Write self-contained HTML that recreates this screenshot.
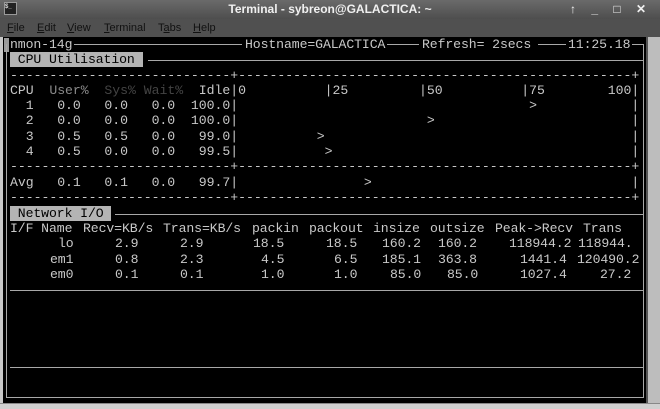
<!DOCTYPE html>
<html><head><meta charset="utf-8"><style>
*{margin:0;padding:0;box-sizing:border-box}
body{width:660px;height:409px;overflow:hidden;background:#c8c8c8;position:relative;font-family:"Liberation Mono",monospace}
#title{position:absolute;left:0;top:0;width:660px;height:19px;background:linear-gradient(#6a6a6a,#4e4e4e);color:#f0f0f0;font:bold 12px "Liberation Sans",sans-serif;text-align:center;line-height:19px}
#menu{position:absolute;left:0;top:19px;width:660px;height:18px;background:#505050;font:11px "Liberation Sans",sans-serif;color:#111;line-height:18px}
#menu span{position:absolute;top:0}
#term{position:absolute;left:3px;top:37px;width:643px;height:366px;background:#000}
#sb{position:absolute;left:646px;top:37px;width:14px;height:366px;background:#bdbdbd;border-left:2px solid #555}
#bot{position:absolute;left:0;top:403px;width:660px;height:6px;background:#d0d0d0;border-top:1px solid #888}
.t{position:absolute;white-space:pre;font-size:13.16px;line-height:15.3px;color:#c8c8c8;letter-spacing:-0.1px}
.h{position:absolute;height:1px;background:#a8a8a8}
.v{position:absolute;width:1px;background:#a8a8a8}
.hl{background:#b4b4b4;color:#000}
.d1{color:#8a8a8a}.d2{color:#444}
</style></head><body>
<div id="title"><span style="position:absolute;left:4px;top:2px;width:13px;height:13px;background:#222;border:1px solid #999;font-size:6px;line-height:8px;color:#ddd;text-align:left">$_</span>Terminal - sybreon@GALACTICA: ~<span style="position:absolute;right:8px;top:0;font-size:12px;letter-spacing:6px">↑ _ □ ✕</span></div>
<div id="menu"><span style="left:7px"><u>F</u>ile</span><span style="left:37px"><u>E</u>dit</span><span style="left:67px"><u>V</u>iew</span><span style="left:104px"><u>T</u>erminal</span><span style="left:158px">T<u>a</u>bs</span><span style="left:193px"><u>H</u>elp</span></div>
<div id="term"></div>
<div id="sb"></div>
<div id="bot"></div>
<div style="position:absolute;left:4px;top:38px;width:5px;height:14px;background:#9a9a9a"></div>
<div class="v" style="left:6px;top:44px;height:353px"></div>
<div class="v" style="left:643px;top:44px;height:353px"></div>
<div class="h" style="left:6px;top:397px;width:638px"></div>
<div class="h" style="left:74px;top:44px;width:168px"></div>
<div class="h" style="left:387px;top:44px;width:32px"></div>
<div class="h" style="left:538px;top:44px;width:28px"></div>
<div class="h" style="left:632px;top:44px;width:12px"></div>
<div class="h" style="left:148px;top:60px;width:495px"></div>
<div class="h" style="left:115px;top:214px;width:528px"></div>
<div class="h" style="left:10px;top:290px;width:633px"></div>
<div class="h" style="left:10px;top:367px;width:633px"></div>
<div class="t" style="left:10px;top:37px">nmon-14g</div>
<div class="t" style="left:245px;top:37px">Hostname=GALACTICA</div>
<div class="t" style="left:422px;top:37px">Refresh= 2secs</div>
<div class="t" style="left:568px;top:37px">11:25.18</div>
<div class="t" style="left:10px;top:52.3px"><span class="hl"> CPU Utilisation </span></div>
<div class="t" style="left:10px;top:67.6px;letter-spacing:-0.03px">----------------------------+--------------------------------------------------+
CPU  <span class="d1">User%</span>  <span class="d2">Sys%</span> <span class="d2">Wait%</span>  Idle|0          |25         |50          |75        100|
  1   0.0   0.0   0.0  100.0|                                     &gt;            |
  2   0.0   0.0   0.0  100.0|                        &gt;                         |
  3   0.5   0.5   0.0   99.0|          &gt;                                       |
  4   0.5   0.0   0.0   99.5|           &gt;                                      |
----------------------------+--------------------------------------------------+
Avg   0.1   0.1   0.0   99.7|                &gt;                                 |
----------------------------+--------------------------------------------------+</div>
<div class="t" style="left:10px;top:205.7px"><span class="hl"> Network I/O </span></div>
<div class="t" style="left:10px;top:221px">I/F Name</div>
<div class="t" style="left:83px;top:221px">Recv=KB/s</div>
<div class="t" style="left:163px;top:221px">Trans=KB/s</div>
<div class="t" style="left:252px;top:221px">packin</div>
<div class="t" style="left:309px;top:221px">packout</div>
<div class="t" style="left:373px;top:221px">insize</div>
<div class="t" style="left:430px;top:221px">outsize</div>
<div class="t" style="left:495px;top:221px">Peak-&gt;Recv</div>
<div class="t" style="left:583px;top:221px">Trans</div>

<div class="t" style="left:58px;top:236.3px">lo</div>
<div class="t" style="left:115px;top:236.3px">2.9</div>
<div class="t" style="left:180px;top:236.3px">2.9</div>
<div class="t" style="left:253px;top:236.3px">18.5</div>
<div class="t" style="left:326px;top:236.3px">18.5</div>
<div class="t" style="left:382px;top:236.3px">160.2</div>
<div class="t" style="left:438px;top:236.3px">160.2</div>
<div class="t" style="left:509px;top:236.3px">118944.2</div>
<div class="t" style="left:578px;top:236.3px">118944.</div>

<div class="t" style="left:50px;top:251.6px">em1</div>
<div class="t" style="left:115px;top:251.6px">0.8</div>
<div class="t" style="left:180px;top:251.6px">2.3</div>
<div class="t" style="left:261px;top:251.6px">4.5</div>
<div class="t" style="left:334px;top:251.6px">6.5</div>
<div class="t" style="left:382px;top:251.6px">185.1</div>
<div class="t" style="left:438px;top:251.6px">363.8</div>
<div class="t" style="left:520px;top:251.6px">1441.4</div>
<div class="t" style="left:577px;top:251.6px">120490.2</div>

<div class="t" style="left:50px;top:266.9px">em0</div>
<div class="t" style="left:115px;top:266.9px">0.1</div>
<div class="t" style="left:180px;top:266.9px">0.1</div>
<div class="t" style="left:261px;top:266.9px">1.0</div>
<div class="t" style="left:334px;top:266.9px">1.0</div>
<div class="t" style="left:390px;top:266.9px">85.0</div>
<div class="t" style="left:447px;top:266.9px">85.0</div>
<div class="t" style="left:520px;top:266.9px">1027.4</div>
<div class="t" style="left:600px;top:266.9px">27.2</div>
</body></html>
